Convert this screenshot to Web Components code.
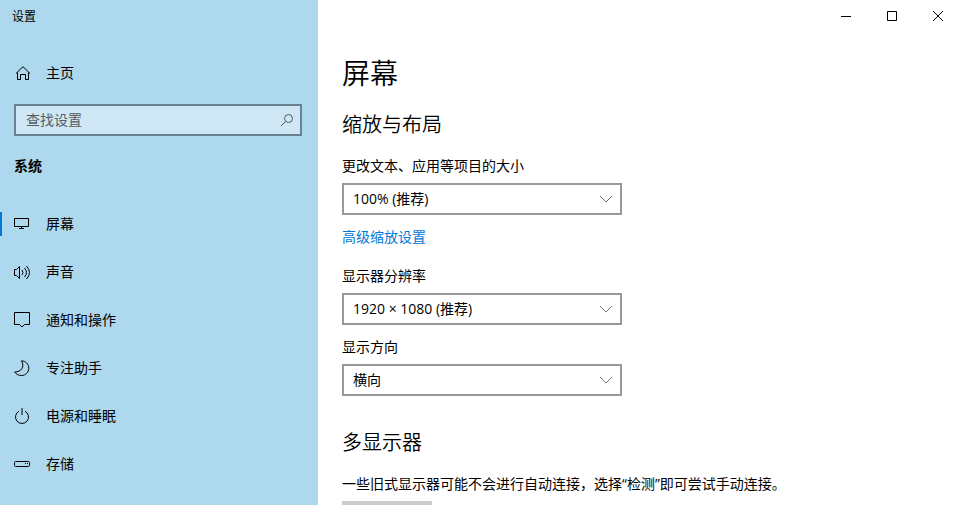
<!DOCTYPE html>
<html lang="zh-CN">
<head>
<meta charset="utf-8">
<title>设置</title>
<style>
    body {
        margin: 0;
        background: #fff;
        color: #000;
        font: 14px/20px "Open Sans", "Noto Sans CJK SC", sans-serif;
    }
</style>
</head>
<body>
<settings-window>
    <settings-sidebar slot="sidebar">
        <nav-item slot="home" icon="home">主页</nav-item>
        <nav-item icon="display" active>屏幕</nav-item>
        <nav-item icon="sound">声音</nav-item>
        <nav-item icon="message">通知和操作</nav-item>
        <nav-item icon="moon">专注助手</nav-item>
        <nav-item icon="power">电源和睡眠</nav-item>
        <nav-item icon="storage">存储</nav-item>
    </settings-sidebar>
    <window-controls slot="controls"></window-controls>
    <display-page></display-page>
</settings-window>

<script>
// 图标
const icons = {
    home: '<path d="M3 8.500 10 1.700l7 6.800M4.500 7.500v7h3v-5h5v5h3v-7"/>',
    display: '<path d="M1.500 2.500h14v8h-14zM8.500 10.500v2M6 12.500h5"/>',
    sound: '<path d="M1.500 5.500h2l3-3v12l-3-3h-2zM9 6q2 2.500 0 5M11.500 4q4 4.500 0 9M13.500 2q6 6.500 0 13"/>',
    message: '<path d="M1.500.5h15v12h-5L9 15l-2.500-2.500h-5z"/>',
    moon: '<path d="M8.500.8c4.500.2 7.300 3.600 7.300 7.400 0 4-3.300 7.300-7.300 7.300-3 0-5.500-1.300-6.800-3.500C8.500 12 12 6.500 8.500.8z"/>',
    power: '<path d="M9 0v7M6 3.200a6.500 6.500 0 1 0 6 0"/>',
    storage: '<rect x="1.500" y="5.500" width="15" height="5" rx="1"/><path d="M12 7.500h1M14 7.500h1"/>'
};

// 挂载 Shadow DOM
function render(host, html) {
    const template = document.createElement("template");
    template.innerHTML = html;
    const shadow = host.attachShadow({ mode: "open" });
    shadow.appendChild(template.content.cloneNode(true));
    return shadow;
}

// 窗口框架：左侧边栏，右侧内容
class SettingsWindow extends HTMLElement {
    constructor() {
        super();
        render(this, `
        <style>
        :host {
            display: grid;
            grid-template-columns: minmax(200px, 318px) 1fr;
            height: 100vh;
            overflow: hidden;
        }
        .content {
            min-width: 0;
            overflow: hidden;
        }
        </style>
        <slot name="sidebar"></slot>
        <div class="content">
            <slot name="controls"></slot>
            <slot></slot>
        </div>
        `);
    }
}

// 侧边栏
class SettingsSidebar extends HTMLElement {
    constructor() {
        super();
        render(this, `
        <style>
        :host {
            display: block;
            background: #aed8ed;
            overflow: hidden;
        }
        .title {
            padding: 0 12px;
            font-size: 12px;
            line-height: 34px;
            margin-bottom: 15px;
        }
        .search {
            display: flex;
            align-items: center;
            box-sizing: border-box;
            height: 32px;
            margin: 7px 16px 0 14px;
            padding: 0 6px 0 10px;
            border: 2px solid #68828f;
            background: #cfe7f4;
        }
        input {
            flex: 1;
            min-width: 0;
            padding: 0;
            border: 0;
            outline: 0;
            background: none;
            font: inherit;
            color: #000;
        }
        input::placeholder {
            color: #535e64;
            opacity: 1;
        }
        .search svg {
            fill: none;
            stroke: #4c5a62;
        }
        h2 {
            margin: 20px 14px 24px;
            font-size: 14px;
            line-height: 20px;
            font-weight: 700;
        }
        </style>
        <div class="title">设置</div>
        <slot name="home"></slot>
        <div class="search">
            <input type="text" placeholder="查找设置" aria-label="查找设置">
            <svg width="14" height="14"><circle cx="8.500" cy="5.500" r="4"/><path d="M5.500 8.500 1 13"/></svg>
        </div>
        <h2>系统</h2>
        <nav><slot></slot></nav>
        `);
    }
}

// 导航项
class NavItem extends HTMLElement {
    constructor() {
        super();
        const icon = icons[this.getAttribute("icon")];
        render(this, `
        <style>
        :host {
            display: block;
        }
        a {
            display: flex;
            align-items: center;
            height: 48px;
            color: inherit;
            text-decoration: none;
        }
        a::before {
            content: "";
            width: 2px;
            height: 24px;
            margin-right: 11px;
        }
        :host([active]) a::before {
            background: #0078d7;
        }
        svg {
            margin-right: 15px;
            fill: none;
            stroke: #000;
        }
        </style>
        <a href="#"><svg width="18" height="16">${icon}</svg><slot></slot></a>
        `);
    }
}

// 最小化、最大化、关闭
class WindowControls extends HTMLElement {
    constructor() {
        super();
        render(this, `
        <style>
        :host {
            display: flex;
            justify-content: flex-end;
            gap: 24px;
            padding-right: 7px;
        }
        button {
            display: flex;
            align-items: center;
            justify-content: center;
            width: 22px;
            height: 32px;
            padding: 0;
            border: 0;
            background: none;
        }
        svg {
            fill: none;
            stroke: #000;
        }
        </style>
        <button aria-label="最小化"><svg width="12" height="12"><path d="M1 6.500h10"/></svg></button>
        <button aria-label="最大化"><svg width="12" height="12"><path d="M1.500 1.500h9v9h-9z"/></svg></button>
        <button aria-label="关闭"><svg width="12" height="12"><path d="M1 1l10 10M11 1 1 11"/></svg></button>
        `);
    }
}

// 带标签的下拉框
class SelectField extends HTMLElement {
    constructor() {
        super();
        render(this, `
        <style>
        :host {
            display: block;
            max-width: 280px;
        }
        label {
            display: block;
            margin-bottom: 7px;
        }
        .box {
            display: grid;
            align-items: center;
        }
        select, svg {
            grid-area: 1 / 1;
        }
        select {
            appearance: none;
            box-sizing: border-box;
            width: 100%;
            height: 32px;
            padding: 0 32px 0 9px;
            border: 2px solid #999;
            border-radius: 0;
            background: #fff;
            color: #000;
            font: inherit;
        }
        svg {
            justify-self: end;
            margin-right: 9px;
            fill: none;
            stroke: #777;
            pointer-events: none;
        }
        </style>
        <label for="field">${this.getAttribute("label")}</label>
        <div class="box">
            <select id="field"><option>${this.getAttribute("value")}</option></select>
            <svg width="14" height="8"><path d="M1 1l6 6 6-6"/></svg>
        </div>
        `);
    }
}

// 屏幕设置页
class DisplayPage extends HTMLElement {
    constructor() {
        super();
        render(this, `
        <style>
        :host {
            display: block;
            padding: 20px 24px 24px;
        }
        h1, h2, p {
            margin: 0;
        }
        h1, h2 {
            font-family: "Noto Sans CJK SC", sans-serif;
            font-weight: 350;
        }
        h1 {
            font-size: 28px;
            line-height: 40px;
        }
        h2 {
            margin: 32px 0 18px;
            font-size: 20px;
            line-height: 28px;
        }
        h1 + h2 {
            margin-top: 18px;
        }
        a {
            display: block;
            width: fit-content;
            margin: 12px 0 19px;
            color: #0078d7;
            text-decoration: none;
        }
        select-field + select-field {
            margin-top: 12px;
        }
        button {
            display: block;
            width: 90px;
            height: 32px;
            margin-top: 7px;
            border: 0;
            background: #ccc;
        }
        </style>
        <h1>屏幕</h1>
        <h2>缩放与布局</h2>
        <select-field label="更改文本、应用等项目的大小" value="100% (推荐)"></select-field>
        <a href="#">高级缩放设置</a>
        <select-field label="显示器分辨率" value="1920 × 1080 (推荐)"></select-field>
        <select-field label="显示方向" value="横向"></select-field>
        <h2>多显示器</h2>
        <p>一些旧式显示器可能不会进行自动连接，选择“检测”即可尝试手动连接。</p>
        <button aria-label="检测"></button>
        `);
    }
}

// 注册组件
customElements.define("settings-window", SettingsWindow);
customElements.define("settings-sidebar", SettingsSidebar);
customElements.define("nav-item", NavItem);
customElements.define("window-controls", WindowControls);
customElements.define("select-field", SelectField);
customElements.define("display-page", DisplayPage);
</script>
</body>
</html>
